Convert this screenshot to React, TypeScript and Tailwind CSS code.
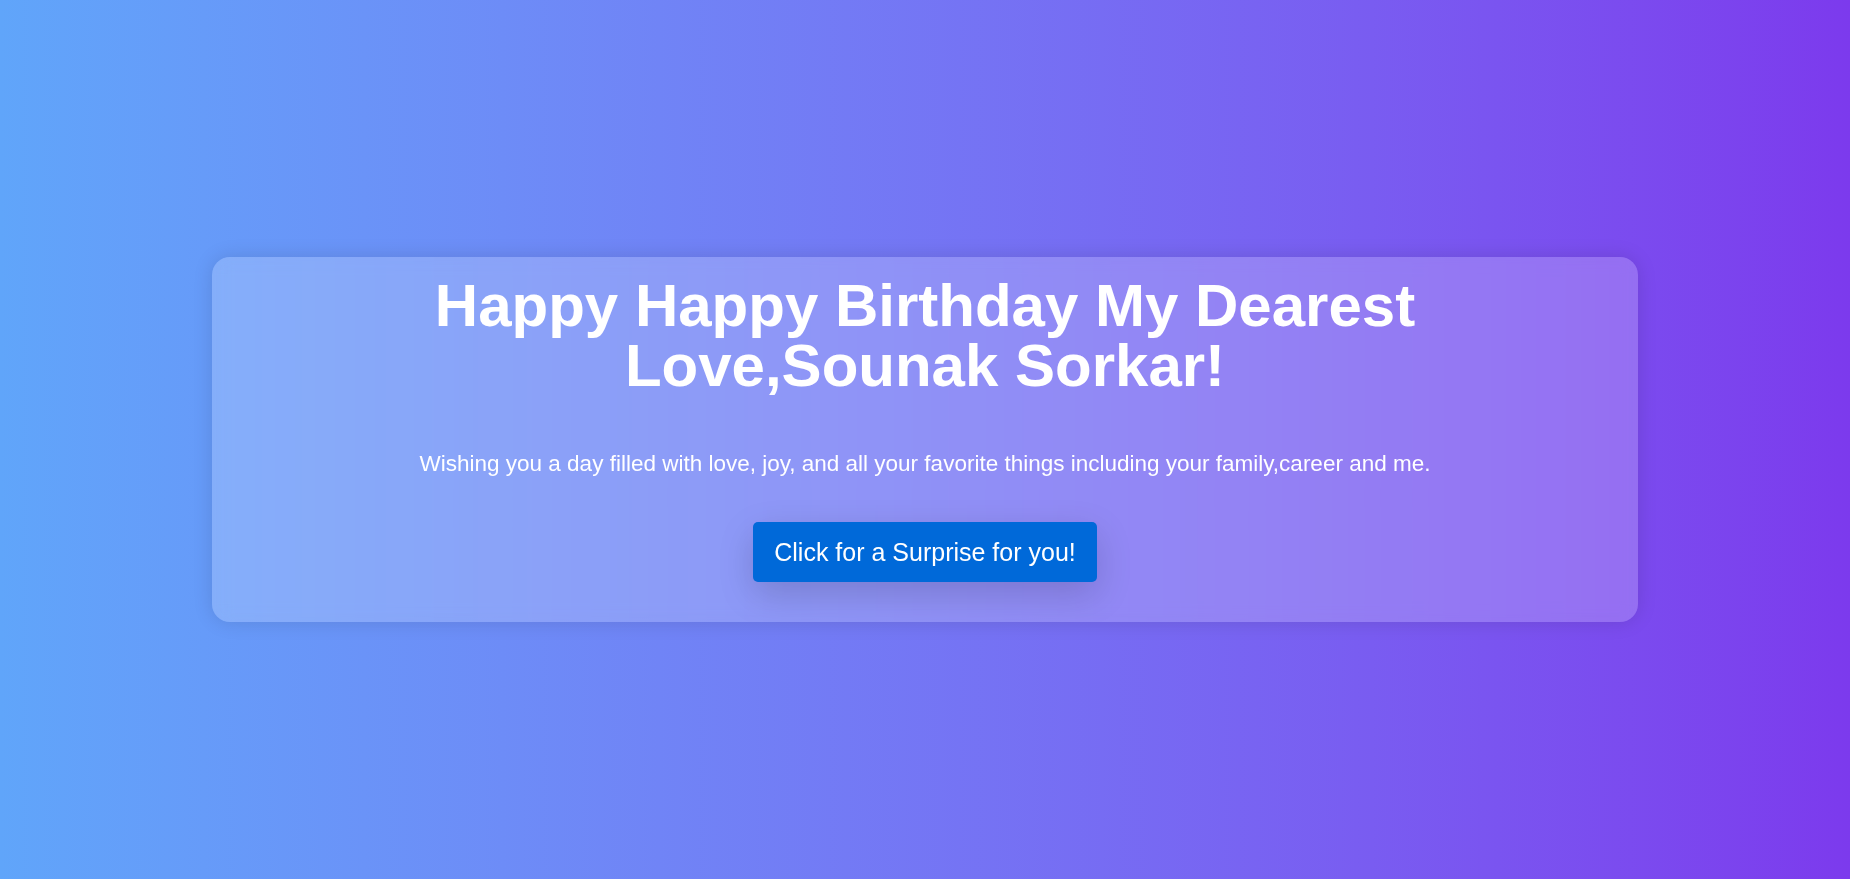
export default function App() {
  return (
    <main className="flex min-h-screen w-full items-center justify-center bg-gradient-to-r from-[#60a5fa] to-[#7c3aed] font-['Liberation_Sans',Arial,sans-serif] text-white">
      <section className="flex w-[1426px] flex-col items-center rounded-[18px] bg-white/20 px-5 pt-[19px] pb-10 text-center shadow-[0_0_20px_rgba(0,0,0,0.12)] backdrop-blur-sm">
        <h1 className="max-w-[1000px] text-[60px] leading-[60px] font-bold">
          Happy Happy Birthday My Dearest Love,Sounak Sorkar!
        </h1>
        <p className="mt-[55px] text-[22.5px] leading-[26px]">
          Wishing you a day filled with love, joy, and all your favorite things
          including your family,career and me.
        </p>
        <button className="mt-[45px] rounded-[5px] bg-[#0069d9] px-[21px] py-[15px] text-[25px] leading-[30px] text-white shadow-[0_12px_36px_rgba(0,0,0,0.16)]">
          Click for a Surprise for you!
        </button>
      </section>
    </main>
  );
}
